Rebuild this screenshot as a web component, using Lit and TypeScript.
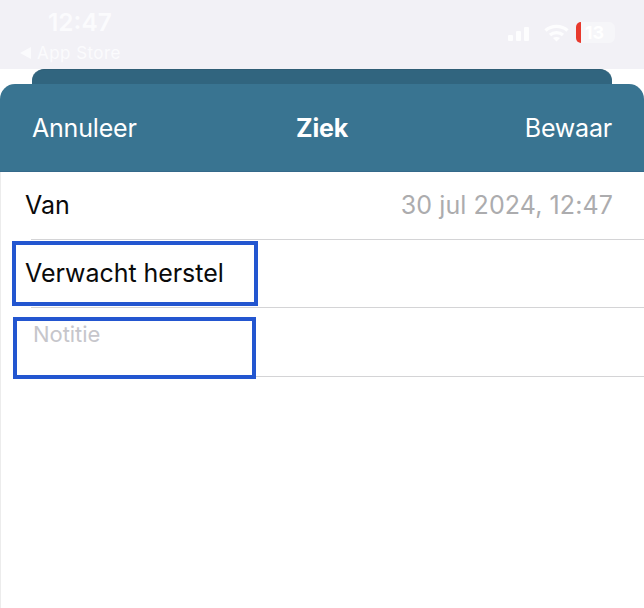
import { LitElement, html, css } from "lit";
import { customElement } from "lit/decorators.js";

@customElement("app-root")
export class AppRoot extends LitElement {
  static styles = css`
    :host { display: block; width: 644px; height: 608px; position: relative; overflow: hidden; background: #fff; font-family: Inter, "Liberation Sans", sans-serif; }
    .status { height: 69px; background: #f2f1f6; position: relative; color: #fff; box-sizing: border-box; }
    .left { padding: 8px 0 0 20px; display: flex; flex-direction: column; }
    .time { font-size: 24.5px; line-height: 28px; font-weight: 600; margin-left: 28px; color: #fbfbfd; }
    .back { display: flex; align-items: center; gap: 6px; font-size: 17px; line-height: 22px; margin-top: 6px; color: #fbfbfd; letter-spacing: 0.45px; }
    .icons { position: absolute; left: 508px; top: 22px; display: flex; align-items: center; }
    .signal { align-self: flex-end; margin-bottom: 2px; }
    .wifi { margin-left: 12px; }
    .battery { width: 39px; height: 21px; margin-left: 7px; display: flex; align-items: center; justify-content: center; background: #f6f6f9; border-radius: 6px; position: relative; font-size: 18px; font-weight: 700; color: #fff; box-sizing: border-box; padding-right: 2px; }
    .red { position: absolute; left: 0; top: 0; bottom: 0; width: 5px; background: #e8392d; border-radius: 5px 0 0 5px; }
    .sheet-back { height: 15px; margin: 0 32px; background: #31657f; border-radius: 12px 12px 0 0; border-top: 1px solid #2f5d75; box-sizing: border-box; }
    .header { height: 88px; background: #397491; border-radius: 15px 15px 0 0; display: grid; grid-template-columns: 1fr auto 1fr; align-items: center; padding: 0 32px; color: #fff; font-size: 25px; border-bottom: 1px solid #34698a; box-sizing: border-box; letter-spacing: -0.2px; }
    .header .title { font-weight: 700; }
    .header .save { text-align: right; }
    .content { border-left: 1px solid #ececec; height: 436px; box-sizing: border-box; }
    .row { height: 68px; display: flex; justify-content: space-between; align-items: center; padding: 0 31px 2px 24px; font-size: 25px; color: #0a0a0a; position: relative; box-sizing: border-box; letter-spacing: -0.05px; }
    .row::after { content: ""; position: absolute; left: 30px; right: 0; bottom: 0; height: 1px; background: #d4d4d6; }
    .value { color: #acacae; letter-spacing: 0.1px; }
    .note { height: 69px; align-items: flex-start; padding: 13px 0 0 32px; font-size: 22px; line-height: 26px; color: #c6c6cb; }
    .mark { position: absolute; border: 4px solid #2356d0; box-sizing: border-box; }
    .m1 { left: 12px; top: 241px; width: 246px; height: 65px; }
    .m2 { left: 13px; top: 317px; width: 243px; height: 62px; }
  `;

  render() {
    return html`
      <div class="status">
        <div class="left">
          <div class="time">12:47</div>
          <div class="back">
            <svg width="11" height="12" viewBox="0 0 11 12"><path d="M11 0V12L0 6Z" fill="#fbfbfd"/></svg>
            <span>App Store</span>
          </div>
        </div>
        <div class="icons">
          <svg class="signal" width="24" height="14" viewBox="0 0 24 14" fill="#fdfdfe">
            <rect x="0" y="8" width="5" height="6" rx="1"/>
            <rect x="8" y="4" width="5" height="10" rx="1"/>
            <rect x="16" y="0" width="5" height="14" rx="1"/>
          </svg>
          <svg class="wifi" width="25" height="18" viewBox="0 0 25 18" fill="none" stroke="#fdfdfe" stroke-width="3.2">
            <path d="M1.5 6.5C7.5 1 17.5 1 23.5 6.5"/>
            <path d="M6 11C9.5 7.8 15.5 7.8 19 11"/>
            <path d="M12.5 17.5L9 14C11 12.6 14 12.6 16 14Z" fill="#fdfdfe" stroke="none"/>
          </svg>
          <div class="battery"><span class="red"></span>13</div>
        </div>
      </div>
      <div class="sheet-back"></div>
      <div class="header"><span>Annuleer</span><span class="title">Ziek</span><span class="save">Bewaar</span></div>
      <div class="content">
        <div class="row"><span>Van</span><span class="value">30 jul 2024, 12:47</span></div>
        <div class="row"><span>Verwacht herstel</span></div>
        <div class="row note"><span>Notitie</span></div>
      </div>
      <div class="mark m1"></div>
      <div class="mark m2"></div>
    `;
  }
}
